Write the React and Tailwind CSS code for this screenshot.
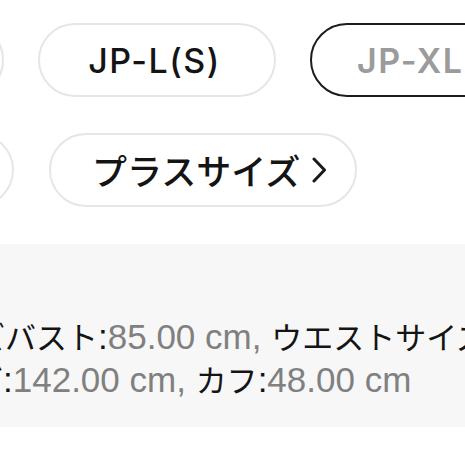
import React from "react";

const latin = { fontFamily: '"Inter", "Liberation Sans", "Noto Sans CJK JP", sans-serif' };
const jp = { fontFamily: '"Noto Sans CJK JP", sans-serif' };
const body = { fontFamily: '"Liberation Sans", "Noto Sans CJK JP", sans-serif' };

function Chevron() {
  return (
    <svg width="14" height="26" viewBox="0 0 14 26" fill="none" className="shrink-0">
      <polyline points="2,2 12.5,13 2,24" stroke="#1a1a1a" strokeWidth="3" strokeLinecap="round" strokeLinejoin="round" />
    </svg>
  );
}

function J({ children }) {
  return (
    <span className="text-[31px] leading-none text-[#141414]" style={jp}>
      {children}
    </span>
  );
}

export default function App() {
  return (
    <div className="w-[465px] h-[465px] bg-white overflow-hidden">
      <div className="pt-[23px] flex flex-col gap-[36px]">
        <div className="flex gap-[34px] overflow-hidden">
          <div className="shrink-0 w-[200px] ml-[-196px] h-[74px] rounded-full border-2 border-[#e6e6e6]" />
          <div
            className="shrink-0 w-[238px] h-[74px] rounded-full border-2 border-[#e6e6e6] flex items-center justify-center text-[34px] font-medium text-[#141414] tracking-[1.5px]"
            style={latin}
          >
            <span className="pr-[5px]">JP-L(S)</span>
          </div>
          <div
            className="shrink-0 h-[74px] rounded-full border-2 border-[#1c1c1c] flex items-center pl-[45px] pr-[45px] text-[34px] font-semibold text-[#9b9b9b] tracking-[1.5px]"
            style={latin}
          >
            JP-XL(M)
          </div>
        </div>
        <div className="flex gap-[35px] overflow-hidden">
          <div className="shrink-0 w-[200px] ml-[-186px] h-[74px] rounded-full border-2 border-[#e6e6e6]" />
          <div
            className="shrink-0 w-[308px] h-[74px] rounded-full border-2 border-[#e6e6e6] flex items-center pl-[41px] gap-[12px] text-[35px] font-medium text-[#141414]"
            style={jp}
          >
            <span>プラスサイズ</span>
            <Chevron />
          </div>
        </div>
      </div>
      <div className="mt-[37px] h-[183px] bg-[#f7f7f7] pt-[71px] overflow-hidden text-[35px] leading-[43px]" style={body}>
        <div className="whitespace-nowrap ml-[-26px]">
          <J>ズバスト</J>
          <span className="text-[#141414]">:</span>
          <span className="text-[#808080]">85.00 cm, </span>
          <J>ウエストサイズ</J>
          <span className="text-[#141414]">:</span>
          <span className="text-[#808080]">70.00 cm</span>
        </div>
        <div className="whitespace-nowrap ml-[-28px]">
          <J>ズ</J>
          <span className="text-[#141414]">:</span>
          <span className="text-[#808080]">142.00 cm, </span>
          <J>カフ</J>
          <span className="text-[#141414]">:</span>
          <span className="text-[#808080]">48.00 cm</span>
        </div>
      </div>
    </div>
  );
}
